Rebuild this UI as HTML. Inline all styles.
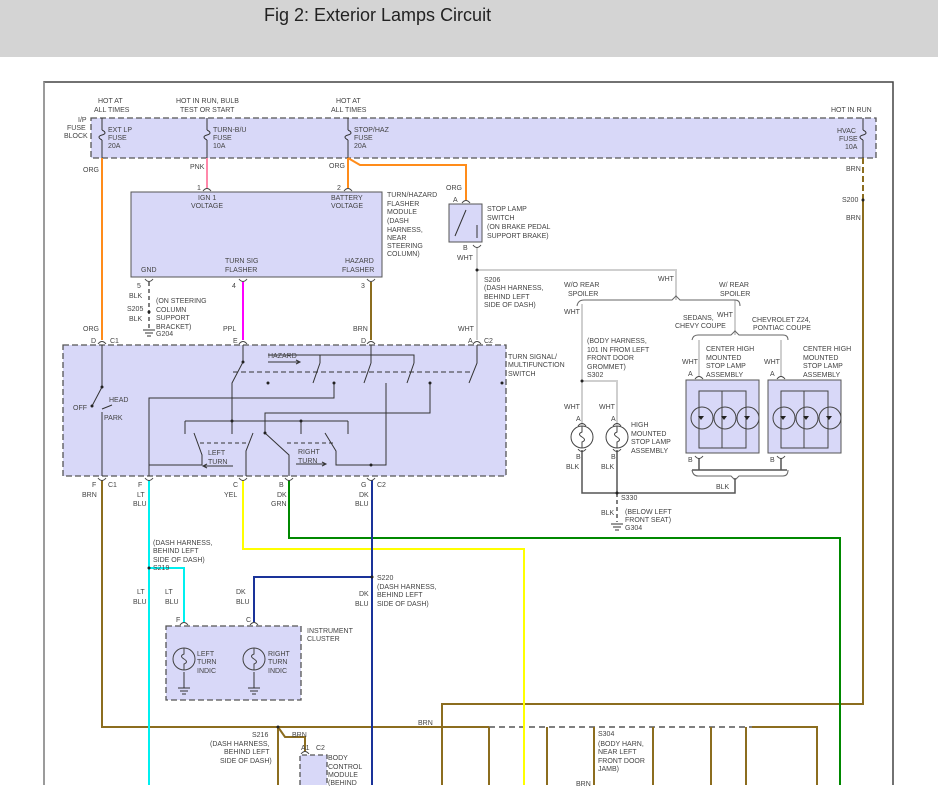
<!DOCTYPE html>
<html><head><meta charset="utf-8"><style>
html,body{margin:0;padding:0;background:#fff;width:938px;height:810px;overflow:hidden}
.hdr{position:absolute;left:0;top:0;width:938px;height:57px;background:#d4d4d4}
.hdr span{position:absolute;left:264px;top:5px;font:18px "Liberation Sans",sans-serif;color:#222}
svg{position:absolute;left:0;top:0}
text{font-family:"Liberation Sans",sans-serif;font-size:7px;fill:#444}
</style></head><body>
<div class="hdr"><span>Fig 2: Exterior Lamps Circuit</span></div>
<svg width="938" height="810" viewBox="0 0 938 810">
<path d="M44 785 V82 H893 V785" fill="none" stroke="#444" stroke-width="1.5"/>
<path d="M44 785 V82" fill="none" stroke="#999" stroke-width="1.5"/>
<rect x="91" y="118" width="785" height="40" fill="#d8d8f8" stroke="#555" stroke-width="1.3" stroke-dasharray="6,3"/>
<rect x="131" y="192" width="251" height="85" fill="#d8d8f8" stroke="#555" stroke-width="1"/>
<rect x="63" y="345" width="443" height="131" fill="#d8d8f8" stroke="#555" stroke-width="1.3" stroke-dasharray="6,3"/>
<rect x="449" y="204" width="33" height="38" fill="#d8d8f8" stroke="#555"/>
<rect x="686" y="380" width="73" height="73" fill="#d8d8f8" stroke="#555"/>
<rect x="768" y="380" width="73" height="73" fill="#d8d8f8" stroke="#555"/>
<rect x="166" y="626" width="135" height="74" fill="#d8d8f8" stroke="#555" stroke-width="1.3" stroke-dasharray="6,3"/>
<path d="M300 785 V755 H327 V785" fill="#d8d8f8" stroke="#555" stroke-width="1.3" stroke-dasharray="5,3"/>

<g stroke="#333" fill="none" stroke-width="1">
<path d="M102 118 V130 M102 140 V158 M102 130 c4 2 4 4 0 5 c-4 1 -4 3 0 5"/>
<path d="M207 118 V130 M207 140 V158 M207 130 c4 2 4 4 0 5 c-4 1 -4 3 0 5"/>
<path d="M348 118 V130 M348 140 V158 M348 130 c4 2 4 4 0 5 c-4 1 -4 3 0 5"/>
<path d="M863 118 V130 M863 140 V158 M863 130 c4 2 4 4 0 5 c-4 1 -4 3 0 5"/>
</g>

<g fill="none" stroke-width="2">
<path d="M102 158 V340" stroke="#ff8c1a"/>
<path d="M348 158 V188 M348 158 L360 165 H466 V200" stroke="#ff8c1a"/>
<path d="M207 158 V188" stroke="#ff88aa"/>
<path d="M243 282 V340" stroke="#ff00ff"/>
<path d="M371 282 V340" stroke="#8c6d1f"/>
<path d="M863 158 V200" stroke="#8c6d1f" stroke-dasharray="6,3"/>
<path d="M863 200 V704 H442 V785" stroke="#8c6d1f"/>
<path d="M102 480 V727 H489 M278 727 V785 M278 727 L285 737 H305 V752" stroke="#8c6d1f"/>
<path d="M489 727 H752" stroke="#555" stroke-width="1.5" stroke-dasharray="6,4"/>
<path d="M752 727 H817 V785 M489 727 V785 M547 727 V785 M594 727 V785 M653 727 V785 M711 727 V785 M746 727 V785" stroke="#8c6d1f"/>
<path d="M149 480 V785 M149 568 H184 V622" stroke="#00f0f0"/>
<path d="M243 480 V549 H524 V785" stroke="#ffff00"/>
<path d="M289 480 V538 H840 V785" stroke="#008800"/>
<path d="M372 480 V785 M372 577 H254 V622" stroke="#1a3399"/>
<path d="M477 248 V340 M477 270 H676 V300" stroke="#cfcfcf"/>
<path d="M582 304 V425 M582 381 H617 V425 M699 340 V376 M781 340 V376 M735 300 V335" stroke="#cfcfcf"/>
</g>
<g fill="none" stroke="#555" stroke-width="1.5">
<path d="M149 282 V330" stroke-dasharray="4,3"/>
<path d="M617 493 V522" stroke-dasharray="4,3"/>
<path d="M582 450 V493 H735 V478 M617 450 V493 M699 458 V470 M781 458 V470"/>
<path d="M692 470 H787"/>
</g>
<g fill="none" stroke="#666" stroke-width="1">
<path d="M577 306 Q578 300 584 300 H672 L676 296 L680 300 H735 Q740 300 740 306"/>
<path d="M692 340 Q693 335 698 335 H731 L735 331 L739 335 H783 Q788 335 788 340"/>
<path d="M692 470 Q693 476 698 476 H731 L735 480 L739 476 H783 Q788 476 788 470"/>
</g>
<!-- connector arcs -->
<g fill="none" stroke="#444" stroke-width="1">
<path d="M203 191 q4 -5 8 0 M344 191 q4 -5 8 0 M462 203 q4 -5 8 0 M98 344 q4 -5 8 0 M239 344 q4 -5 8 0 M367 344 q4 -5 8 0 M473 344 q4 -5 8 0"/>
<path d="M145 279 q4 5 8 0 M239 279 q4 5 8 0 M367 279 q4 5 8 0 M473 245 q4 5 8 0"/>
<path d="M98 478 q4 5 8 0 M145 478 q4 5 8 0 M239 478 q4 5 8 0 M285 478 q4 5 8 0 M367 478 q4 5 8 0"/>
<path d="M180 625 q4 -5 8 0 M250 625 q4 -5 8 0 M578 426 q4 -5 8 0 M613 426 q4 -5 8 0 M695 379 q4 -5 8 0 M777 379 q4 -5 8 0 M301 754 q4 -5 8 0"/>
<path d="M578 449 q4 5 8 0 M613 449 q4 5 8 0 M695 456 q4 5 8 0 M777 456 q4 5 8 0"/>
</g>
<g stroke="#333" stroke-width="1">
<path d="M143 330 H155 M145 333 H153 M147 336 H151"/>
<path d="M611 524 H623 M613 527 H621 M615 530 H619"/>
<path d="M178 688 H190 M180 691 H188 M182 694 H186 M184 672 V688"/>
<path d="M248 688 H260 M250 691 H258 M252 694 H256 M254 672 V688"/>
</g>
<g fill="none" stroke="#444" stroke-width="1">
<circle cx="582" cy="437" r="11"/><circle cx="617" cy="437" r="11"/>
<circle cx="184" cy="659" r="11"/><circle cx="254" cy="659" r="11"/>
<path d="M582 426 V432 q-5 2 0 5 q5 3 0 5 V448 M617 426 V432 q-5 2 0 5 q5 3 0 5 V448 M184 648 V654 q-5 2 0 5 q5 3 0 5 V670 M254 648 V654 q-5 2 0 5 q5 3 0 5 V670"/>
<circle cx="702" cy="418" r="11"/><circle cx="725" cy="418" r="11"/><circle cx="748" cy="418" r="11"/>
<circle cx="784" cy="418" r="11"/><circle cx="807" cy="418" r="11"/><circle cx="830" cy="418" r="11"/>
<path d="M699 391 H746 V448 H699 Z M722 391 V448"/>
<path d="M781 391 H828 V448 H781 Z M804 391 V448"/>
</g>
<g fill="#222">
<path d="M698 416 h6 l-3 4z M721 416 h6 l-3 4z M744 416 h6 l-3 4z M780 416 h6 l-3 4z M803 416 h6 l-3 4z M826 416 h6 l-3 4z"/>
</g>
<g stroke="#333" stroke-width="1" fill="none">
<path d="M102 345 V387 L92 406 M102 409 L112 405 M102 412 V476"/>
<path d="M243 345 V362 L232 383 V421 M149 476 V398 H334 V383"/>
<path d="M185 421 H348 M185 421 V434 M232 421 V434 M301 421 V434 M348 421 V434"/>
<path d="M194 433 L202 455 V465 H149 M253 433 L246 451 V476 M265 433 L289 455 V476 M325 433 L336 451 V465 H386 V383"/>
<path d="M265 433 V413 H430 V383"/>
<path d="M268 355 H414 V363 M320 355 V363 M371 345 V363"/>
<path d="M320 363 L313 383 M371 363 L364 383 M414 363 L407 383 M477 345 V363 L469 383"/>
<path d="M233 372 H470" stroke-dasharray="5,3"/>
<path d="M200 443 H249 M287 443 H336" stroke-dasharray="4,3"/>
<path d="M268 362 H300 M296 360 L300 362 L296 364 M203 466 H233 M207 464 L203 466 L207 468 M296 464 H326 M322 462 L326 464 L322 466"/>
<path d="M466 210 L455 236 M477 225 V238"/>
</g>
<g fill="#222">
<circle cx="243" cy="362" r="1.5"/><circle cx="268" cy="383" r="1.5"/><circle cx="334" cy="383" r="1.5"/><circle cx="430" cy="383" r="1.5"/><circle cx="502" cy="383" r="1.5"/><circle cx="232" cy="421" r="1.5"/><circle cx="301" cy="421" r="1.5"/><circle cx="265" cy="433" r="1.5"/><circle cx="371" cy="465" r="1.5"/>
<circle cx="149" cy="312" r="1.5"/><circle cx="477" cy="270" r="1.5"/><circle cx="582" cy="381" r="1.5"/><circle cx="617" cy="493" r="1.5"/>
<circle cx="149" cy="568" r="1.5"/><circle cx="372" cy="577" r="1.5"/><circle cx="278" cy="727" r="1.5"/><circle cx="863" cy="200" r="1.5"/>
<circle cx="102" cy="387" r="1.5"/><circle cx="92" cy="406" r="1.5"/>
</g>

<text x="98" y="103">HOT AT</text><text x="94" y="112">ALL TIMES</text>
<text x="176" y="103">HOT IN RUN, BULB</text><text x="180" y="112">TEST OR START</text>
<text x="336" y="103">HOT AT</text><text x="331" y="112">ALL TIMES</text>
<text x="831" y="112">HOT IN RUN</text>
<text x="78" y="122">I/P</text><text x="67" y="130">FUSE</text><text x="64" y="138">BLOCK</text>
<text x="108" y="132">EXT LP</text><text x="108" y="140">FUSE</text><text x="108" y="148">20A</text>
<text x="213" y="132">TURN-B/U</text><text x="213" y="140">FUSE</text><text x="213" y="148">10A</text>
<text x="354" y="132">STOP/HAZ</text><text x="354" y="140">FUSE</text><text x="354" y="148">20A</text>
<text x="837" y="133">HVAC</text><text x="839" y="141">FUSE</text><text x="845" y="149">10A</text>
<text x="83" y="172">ORG</text><text x="190" y="169">PNK</text><text x="329" y="168">ORG</text>
<text x="846" y="171">BRN</text><text x="842" y="202">S200</text><text x="846" y="220">BRN</text>
<text x="197" y="190">1</text><text x="337" y="190">2</text>
<text x="198" y="200">IGN 1</text><text x="191" y="208">VOLTAGE</text>
<text x="331" y="200">BATTERY</text><text x="331" y="208">VOLTAGE</text>
<text x="141" y="272">GND</text><text x="225" y="263">TURN SIG</text><text x="225" y="272">FLASHER</text>
<text x="345" y="263">HAZARD</text><text x="342" y="272">FLASHER</text>
<text x="387" y="197">TURN/HAZARD</text><text x="387" y="206">FLASHER</text><text x="387" y="214">MODULE</text><text x="387" y="223">(DASH</text><text x="387" y="232">HARNESS,</text><text x="387" y="240">NEAR</text><text x="387" y="248">STEERING</text><text x="387" y="256">COLUMN)</text>
<text x="446" y="190">ORG</text><text x="453" y="202">A</text><text x="463" y="250">B</text><text x="457" y="260">WHT</text>
<text x="487" y="211">STOP LAMP</text><text x="487" y="220">SWITCH</text><text x="487" y="229">(ON BRAKE PEDAL</text><text x="487" y="238">SUPPORT BRAKE)</text>
<text x="137" y="288">5</text><text x="232" y="288">4</text><text x="361" y="288">3</text>
<text x="129" y="298">BLK</text><text x="127" y="311">S205</text><text x="129" y="321">BLK</text>
<text x="156" y="303">(ON STEERING</text><text x="156" y="312">COLUMN</text><text x="156" y="320">SUPPORT</text><text x="156" y="329">BRACKET)</text><text x="156" y="336">G204</text>
<text x="83" y="331">ORG</text><text x="223" y="331">PPL</text><text x="353" y="331">BRN</text><text x="458" y="331">WHT</text>
<text x="91" y="343">D</text><text x="110" y="343">C1</text><text x="233" y="343">E</text><text x="361" y="343">D</text><text x="468" y="343">A</text><text x="484" y="343">C2</text>
<text x="484" y="282">S206</text><text x="484" y="290">(DASH HARNESS,</text><text x="484" y="299">BEHIND LEFT</text><text x="484" y="307">SIDE OF DASH)</text>
<text x="658" y="281">WHT</text>
<text x="564" y="287">W/O REAR</text><text x="568" y="296">SPOILER</text>
<text x="719" y="287">W/ REAR</text><text x="720" y="296">SPOILER</text>
<text x="564" y="314">WHT</text>
<text x="683" y="320">SEDANS,</text><text x="675" y="328">CHEVY COUPE</text><text x="717" y="317">WHT</text>
<text x="752" y="322">CHEVROLET Z24,</text><text x="753" y="330">PONTIAC COUPE</text>
<text x="587" y="343">(BODY HARNESS,</text><text x="587" y="352">101 IN FROM LEFT</text><text x="587" y="360">FRONT DOOR</text><text x="587" y="369">GROMMET)</text><text x="587" y="377">S302</text>
<text x="706" y="351">CENTER HIGH</text><text x="706" y="360">MOUNTED</text><text x="706" y="368">STOP LAMP</text><text x="706" y="377">ASSEMBLY</text>
<text x="803" y="351">CENTER HIGH</text><text x="803" y="360">MOUNTED</text><text x="803" y="368">STOP LAMP</text><text x="803" y="377">ASSEMBLY</text>
<text x="682" y="364">WHT</text><text x="764" y="364">WHT</text><text x="688" y="376">A</text><text x="770" y="376">A</text>
<text x="688" y="462">B</text><text x="770" y="462">B</text><text x="716" y="489">BLK</text>
<text x="564" y="409">WHT</text><text x="599" y="409">WHT</text><text x="576" y="421">A</text><text x="611" y="421">A</text>
<text x="631" y="427">HIGH</text><text x="631" y="436">MOUNTED</text><text x="631" y="444">STOP LAMP</text><text x="631" y="453">ASSEMBLY</text>
<text x="576" y="459">B</text><text x="611" y="459">B</text><text x="566" y="469">BLK</text><text x="601" y="469">BLK</text>
<text x="621" y="500">S330</text><text x="601" y="515">BLK</text><text x="625" y="514">(BELOW LEFT</text><text x="625" y="522">FRONT SEAT)</text><text x="625" y="530">G304</text>
<text x="508" y="359">TURN SIGNAL/</text><text x="508" y="367">MULTIFUNCTION</text><text x="508" y="376">SWITCH</text>
<text x="268" y="358">HAZARD</text>
<text x="73" y="410">OFF</text><text x="109" y="402">HEAD</text><text x="104" y="420">PARK</text>
<text x="208" y="455">LEFT</text><text x="208" y="464">TURN</text><text x="298" y="454">RIGHT</text><text x="298" y="463">TURN</text>
<text x="92" y="487">F</text><text x="108" y="487">C1</text><text x="138" y="487">F</text><text x="233" y="487">C</text><text x="279" y="487">B</text><text x="361" y="487">G</text><text x="377" y="487">C2</text>
<text x="82" y="497">BRN</text><text x="137" y="497">LT</text><text x="133" y="506">BLU</text><text x="224" y="497">YEL</text><text x="277" y="497">DK</text><text x="271" y="506">GRN</text><text x="359" y="497">DK</text><text x="355" y="506">BLU</text>
<text x="153" y="545">(DASH HARNESS,</text><text x="153" y="553">BEHIND LEFT</text><text x="153" y="562">SIDE OF DASH)</text><text x="153" y="570">S219</text>
<text x="377" y="580">S220</text><text x="377" y="589">(DASH HARNESS,</text><text x="377" y="597">BEHIND LEFT</text><text x="377" y="606">SIDE OF DASH)</text>
<text x="137" y="594">LT</text><text x="133" y="604">BLU</text><text x="165" y="594">LT</text><text x="165" y="604">BLU</text>
<text x="236" y="594">DK</text><text x="236" y="604">BLU</text><text x="359" y="596">DK</text><text x="355" y="606">BLU</text>
<text x="176" y="622">F</text><text x="246" y="622">C</text>
<text x="307" y="633">INSTRUMENT</text><text x="307" y="641">CLUSTER</text>
<text x="197" y="656">LEFT</text><text x="197" y="664">TURN</text><text x="197" y="673">INDIC</text>
<text x="268" y="656">RIGHT</text><text x="268" y="664">TURN</text><text x="268" y="673">INDIC</text>
<text x="418" y="725">BRN</text><text x="252" y="737">S216</text><text x="210" y="746">(DASH HARNESS,</text><text x="224" y="754">BEHIND LEFT</text><text x="220" y="763">SIDE OF DASH)</text>
<text x="292" y="737">BRN</text><text x="301" y="750">A1</text><text x="316" y="750">C2</text>
<text x="328" y="760">BODY</text><text x="328" y="769">CONTROL</text><text x="328" y="777">MODULE</text><text x="328" y="785">(BEHIND</text>
<text x="598" y="736">S304</text><text x="598" y="746">(BODY HARN,</text><text x="598" y="754">NEAR LEFT</text><text x="598" y="763">FRONT DOOR</text><text x="598" y="771">JAMB)</text><text x="576" y="786">BRN</text>
<rect x="0" y="786" width="938" height="24" fill="#fff"/>
</svg>
</body></html>
